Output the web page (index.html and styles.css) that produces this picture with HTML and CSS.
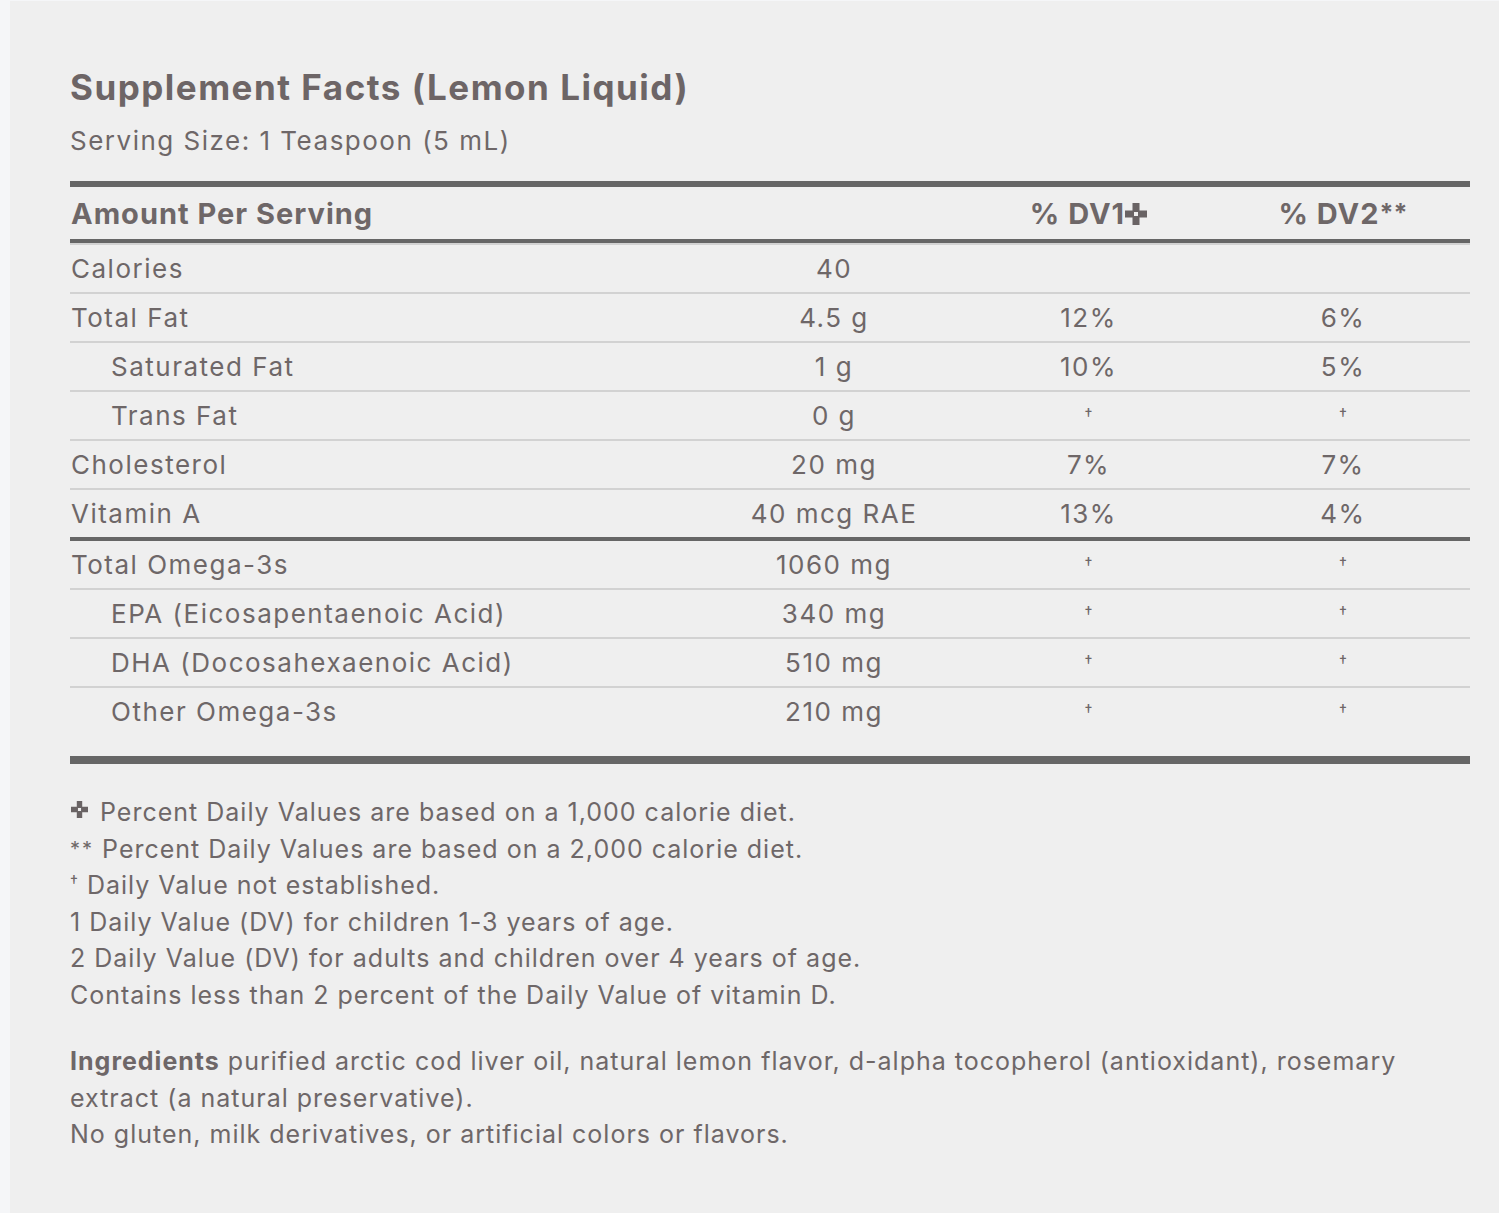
FILE: index.html
```html
<!DOCTYPE html>
<html lang="en">
<head>
<meta charset="utf-8">
<title>Supplement Facts</title>
<link rel="stylesheet" href="styles.css">
</head>
<body>
<div class="panel">
  <h1 class="title">Supplement Facts (Lemon Liquid)</h1>
  <p class="serving">Serving Size: 1 Teaspoon (5 mL)</p>

  <div class="facts">
    <div class="row head">
      <div class="label">Amount Per Serving</div>
      <div class="cell"></div>
      <div class="cell">% DV1<svg class="cross-head" viewBox="0 0 22 22" aria-hidden="true"><path fill-rule="evenodd" d="M7.5 0H14.5V7.5H22V14.5H14.5V22H7.5V14.5H0V7.5H7.5Z M9 9H13V13H9Z"/></svg></div>
      <div class="cell">% DV2<span class="stars">**</span></div>
    </div>
    <div class="row first">
      <div class="label">Calories</div>
      <div class="cell">40</div>
      <div class="cell"></div>
      <div class="cell"></div>
    </div>
    <div class="row">
      <div class="label">Total Fat</div>
      <div class="cell">4.5 g</div>
      <div class="cell">12%</div>
      <div class="cell">6%</div>
    </div>
    <div class="row">
      <div class="label sub">Saturated Fat</div>
      <div class="cell">1 g</div>
      <div class="cell">10%</div>
      <div class="cell">5%</div>
    </div>
    <div class="row">
      <div class="label sub">Trans Fat</div>
      <div class="cell">0 g</div>
      <div class="cell"><span class="dag">†</span></div>
      <div class="cell"><span class="dag">†</span></div>
    </div>
    <div class="row">
      <div class="label">Cholesterol</div>
      <div class="cell">20 mg</div>
      <div class="cell">7%</div>
      <div class="cell">7%</div>
    </div>
    <div class="row group-end">
      <div class="label">Vitamin A</div>
      <div class="cell">40 mcg RAE</div>
      <div class="cell">13%</div>
      <div class="cell">4%</div>
    </div>
    <div class="row">
      <div class="label">Total Omega-3s</div>
      <div class="cell">1060 mg</div>
      <div class="cell"><span class="dag">†</span></div>
      <div class="cell"><span class="dag">†</span></div>
    </div>
    <div class="row">
      <div class="label sub">EPA (Eicosapentaenoic Acid)</div>
      <div class="cell">340 mg</div>
      <div class="cell"><span class="dag">†</span></div>
      <div class="cell"><span class="dag">†</span></div>
    </div>
    <div class="row">
      <div class="label sub">DHA (Docosahexaenoic Acid)</div>
      <div class="cell">510 mg</div>
      <div class="cell"><span class="dag">†</span></div>
      <div class="cell"><span class="dag">†</span></div>
    </div>
    <div class="row last">
      <div class="label sub">Other Omega-3s</div>
      <div class="cell">210 mg</div>
      <div class="cell"><span class="dag">†</span></div>
      <div class="cell"><span class="dag">†</span></div>
    </div>
  </div>

  <div class="notes">
    <p><svg class="cross-note" viewBox="0 0 22 22" aria-hidden="true"><path fill-rule="evenodd" d="M7.5 0H14.5V7.5H22V14.5H14.5V22H7.5V14.5H0V7.5H7.5Z M9 9H13V13H9Z"/></svg> Percent Daily Values are based on a 1,000 calorie diet.</p>
    <p><span class="note-star">**</span> Percent Daily Values are based on a 2,000 calorie diet.</p>
    <p><span class="note-dag">†</span> Daily Value not established.</p>
    <p>1 Daily Value (DV) for children 1-3 years of age.</p>
    <p>2 Daily Value (DV) for adults and children over 4 years of age.</p>
    <p>Contains less than 2 percent of the Daily Value of vitamin D.</p>
  </div>

  <p class="ingredients"><strong>Ingredients</strong> purified arctic cod liver oil, natural lemon flavor, d-alpha tocopherol (antioxidant), rosemary<br>extract (a natural preservative).<br>No gluten, milk derivatives, or artificial colors or flavors.</p>
</div>
</body>
</html>
```

FILE: styles.css
```css
html, body {
  margin: 0;
  padding: 0;
}

body {
  background: #f5f6f8;
  font-family: "Inter", "Liberation Sans", sans-serif;
  color: #6e6768;
}

.panel {
  margin: 1px 0 0 10px;
  background: #efefef;
  padding: 64px 29px 70px 60px;
  min-height: 1100px;
}

.title {
  margin: 0;
  font-size: 35px;
  line-height: 44px;
  font-weight: 700;
  letter-spacing: 1.5px;
  color: #6d6566;
}

.serving {
  margin: 14px 0 0;
  font-size: 26px;
  line-height: 36px;
  letter-spacing: 1.5px;
}

.facts {
  margin-top: 22px;
  border-top: 6px solid #666;
  border-bottom: 8px solid #666;
  padding-bottom: 21px;
}

.row {
  display: grid;
  grid-template-columns: 637px 254px 255px 254px;
  align-items: center;
  height: 47px;
  border-bottom: 2px solid #d2d2d2;
  font-size: 26px;
  letter-spacing: 1.5px;
}

.row.head {
  height: 52px;
  border-bottom: 4px solid #666;
  font-size: 29px;
  font-weight: 700;
  letter-spacing: 1px;
}

.row.first {
  border-top: 2px solid #d2d2d2;
}

.row.group-end {
  border-bottom: 4px solid #666;
}

.row.last {
  border-bottom: none;
}

.label {
  padding-left: 1px;
  white-space: nowrap;
}

.label.sub {
  padding-left: 41px;
}

.cell {
  text-align: center;
  white-space: nowrap;
}

.cross-head {
  width: 22px;
  height: 22px;
  fill: #696364;
  vertical-align: -1px;
}

.stars {
  font-size: 25px;
  line-height: 0;
  vertical-align: 2px;
  letter-spacing: 0;
}

.dag {
  display: inline-block;
  font-size: 16px;
  letter-spacing: 0;
  transform: translateY(-5px);
}

.notes {
  margin-top: 30px;
  font-size: 25px;
  line-height: 36.5px;
  letter-spacing: 1px;
}

.notes p {
  margin: 0;
}

.cross-note {
  width: 19px;
  height: 17px;
  fill: #696364;
  vertical-align: 3px;
  margin-right: 3px;
}

.note-star {
  font-size: 20px;
  line-height: 0;
  vertical-align: 2px;
  letter-spacing: 2px;
}

.note-dag {
  font-size: 16px;
  line-height: 0;
  vertical-align: 7px;
}

.ingredients {
  margin: 30px 0 0;
  font-size: 25px;
  line-height: 36.5px;
  letter-spacing: 1px;
}

.ingredients strong {
  font-weight: 700;
}
```
